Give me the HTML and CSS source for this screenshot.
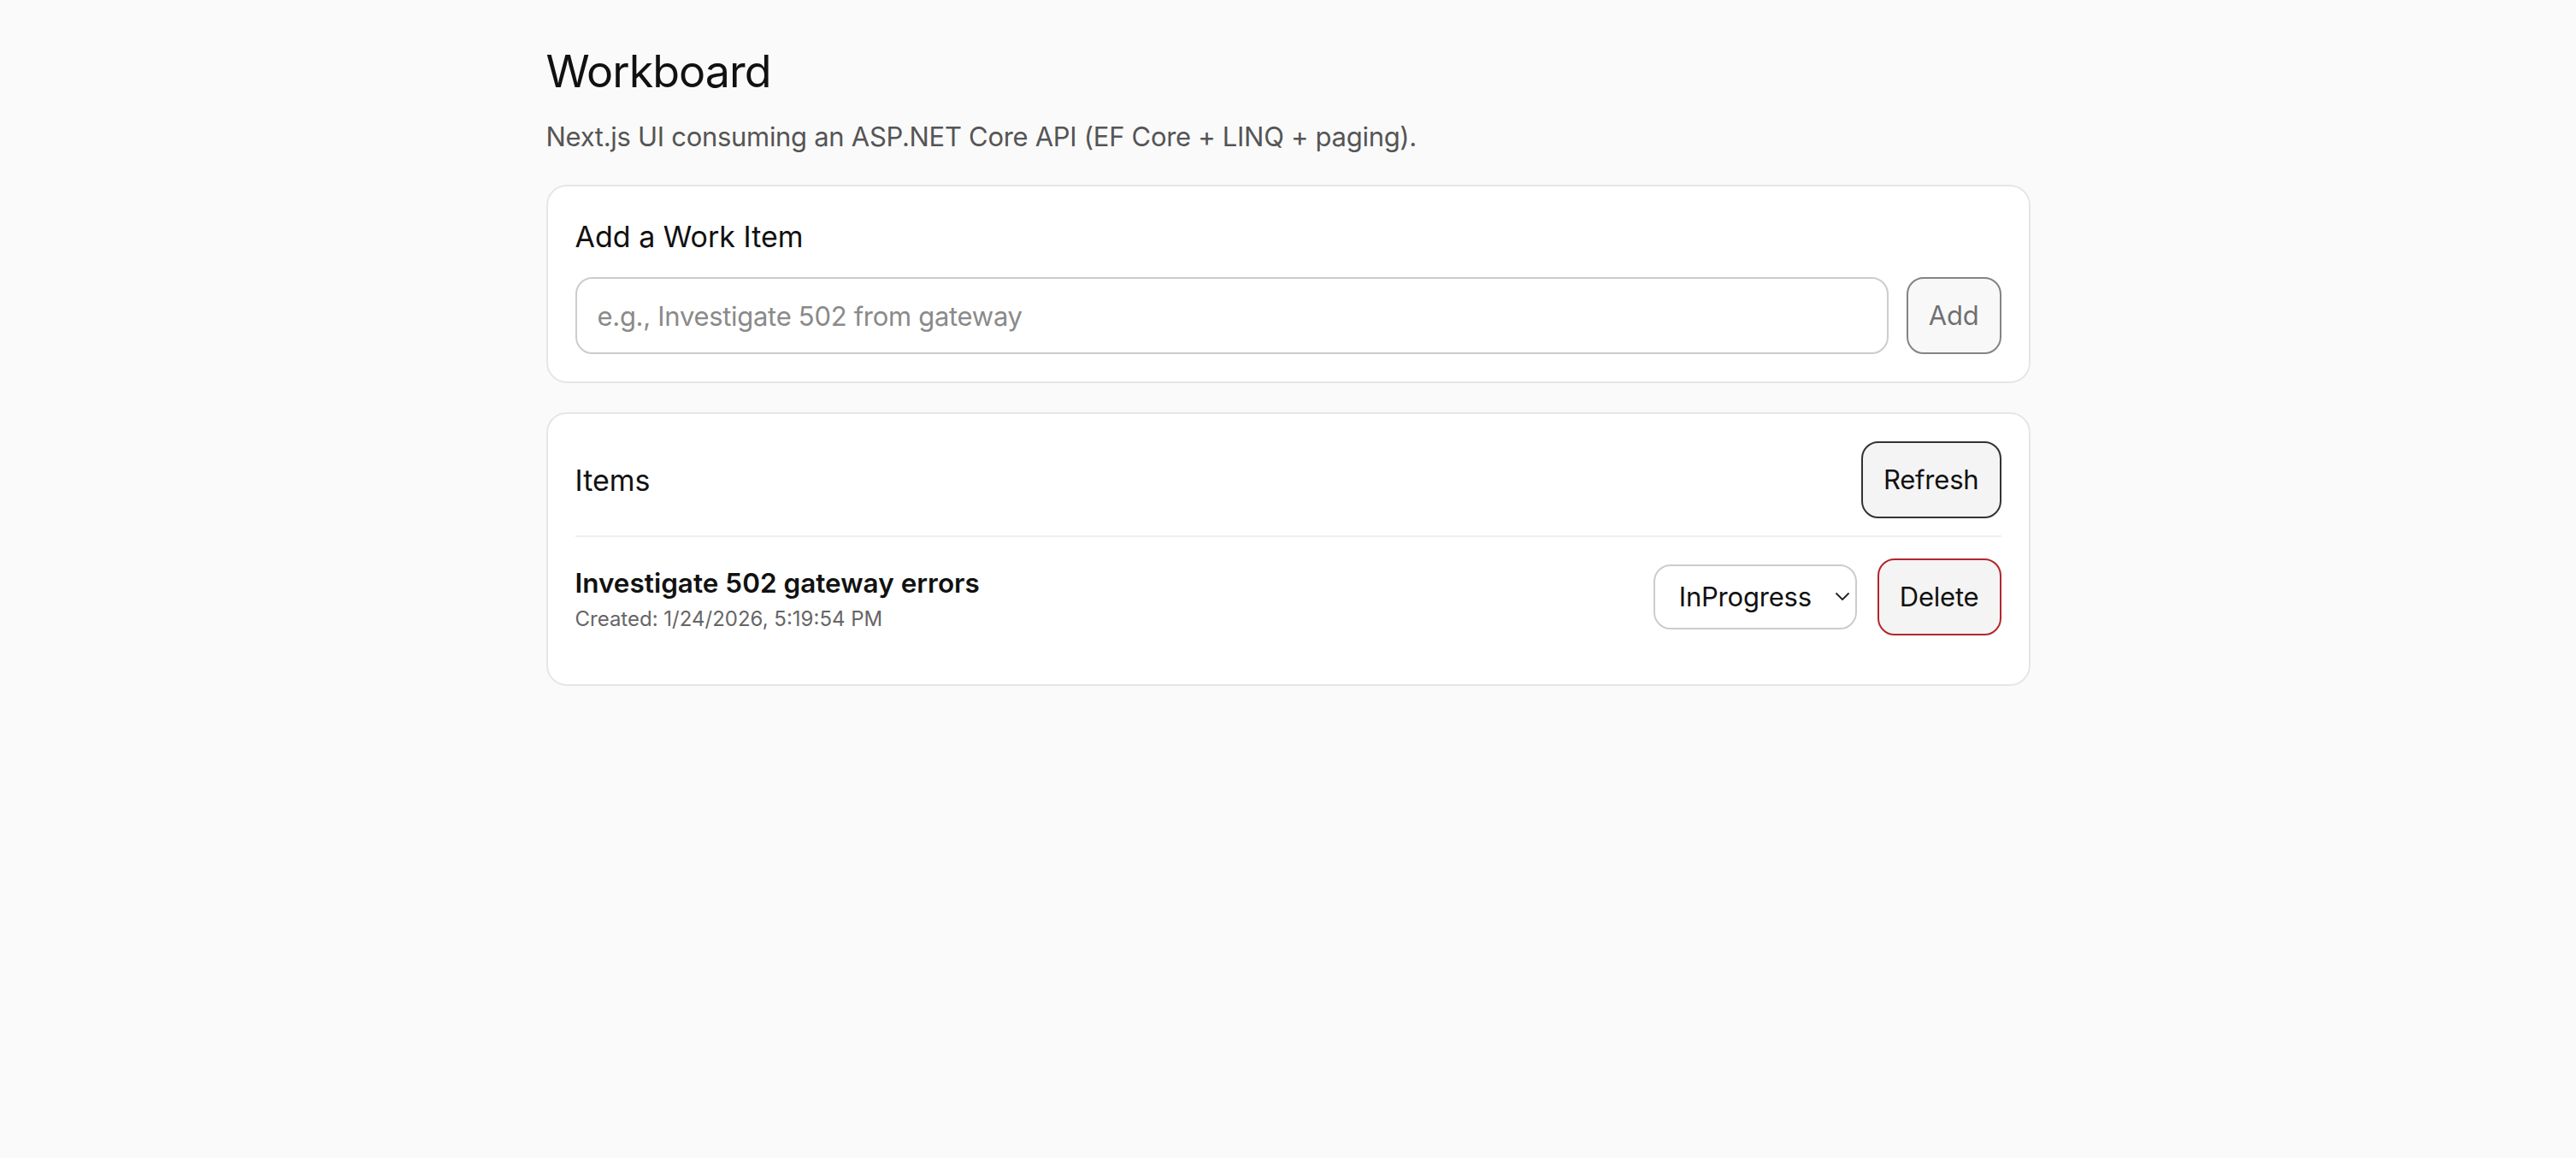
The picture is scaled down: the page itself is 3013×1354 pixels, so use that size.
FILE: index.html
```html
<!DOCTYPE html>
<html lang="en">
<head>
    <meta charset="UTF-8">
    <meta name="viewport" content="width=device-width, initial-scale=1.0">
    <title>Workboard</title>
    <link rel="stylesheet" href="styles.css">
</head>
<body>
    <main class="page">
        <h1>Workboard</h1>
        <p class="subtitle">Next.js UI consuming an ASP.NET Core API (EF Core + LINQ + paging).</p>

        <section class="card">
            <h2>Add a Work Item</h2>
            <form class="add-form" onsubmit="return false;">
                <input class="text-input" type="text" placeholder="e.g., Investigate 502 from gateway">
                <button class="button" type="submit" disabled>Add</button>
            </form>
        </section>

        <section class="card">
            <div class="card-header">
                <h2>Items</h2>
                <button class="button" type="button">Refresh</button>
            </div>

            <ul class="item-list">
                <li class="item">
                    <div class="item-info">
                        <div class="item-title">Investigate 502 gateway errors</div>
                        <div class="item-meta">Created: 1/24/2026, 5:19:54 PM</div>
                    </div>
                    <div class="item-actions">
                        <span class="select-wrap">
                            <select class="status-select">
                                <option>Todo</option>
                                <option selected>InProgress</option>
                                <option>Done</option>
                            </select>
                            <svg class="chevron" width="16" height="9" viewBox="0 0 16 9" aria-hidden="true">
                                <path d="M1 1 L8 8 L15 1" fill="none" stroke="#222" stroke-width="1.8" stroke-linecap="round" stroke-linejoin="round"/>
                            </svg>
                        </span>
                        <button class="button button-danger" type="button">Delete</button>
                    </div>
                </li>
            </ul>
        </section>
    </main>
</body>
</html>
```

FILE: styles.css
```css
body {
    margin: 0;
    background: #fafafa;
    color: #111;
    font-family: Inter, "Noto Sans", "Liberation Sans", sans-serif;
}
.page {
    max-width: 1736px;
    margin: 0 auto;
    padding-top: 50px;
}
h1 {
    margin: 0 0 19px;
    font-size: 52px;
    font-weight: 400;
    line-height: 67px;
    letter-spacing: -1px;
}
.subtitle {
    margin: 0 0 32px;
    color: #555;
    font-size: 31px;
    line-height: 48px;
    letter-spacing: -0.3px;
}
.card {
    background: white;
    border: 2px solid #e6e6e6;
    border-radius: 24px;
    padding: 32px;
    margin-bottom: 34px;
}
.card h2 {
    margin: 0 0 21px;
    font-size: 34px;
    font-weight: 400;
    line-height: 53px;
}
.add-form {
    display: flex;
    gap: 21px;
}
.text-input {
    flex: 1;
    height: 90px;
    box-sizing: border-box;
    border: 2px solid #ccc;
    border-radius: 20px;
    padding: 0 24px;
    font-family: inherit;
    font-size: 31px;
    letter-spacing: -0.3px;
    color: #111;
    outline: none;
}
.text-input::placeholder {
    color: #8a8a8a;
}
.button {
    background: #f4f4f4;
    color: #111;
    border: 2px solid #333;
    border-radius: 20px;
    padding: 24px;
    font-family: inherit;
    font-size: 31px;
    line-height: 38px;
    letter-spacing: -0.2px;
    cursor: pointer;
}
.button:disabled {
    opacity: 0.6;
    cursor: default;
}
.button-danger {
    border-color: #b3262b;
}
.card-header {
    display: flex;
    align-items: center;
    justify-content: space-between;
    margin-bottom: 20px;
}
.card-header h2 {
    margin: 0;
}
.item-list {
    list-style: none;
    margin: 0;
    padding: 0;
}
.item {
    display: flex;
    align-items: center;
    justify-content: space-between;
    border-top: 2px solid #eee;
    padding: 25px 0 25px;
}
.item-info {
    padding-top: 8px;
}
.item-title {
    font-size: 31.5px;
    font-weight: 600;
    line-height: 36px;
}
.item-meta {
    margin-top: 8px;
    color: #666;
    font-size: 24px;
    line-height: 32px;
}
.item-actions {
    display: flex;
    align-items: center;
    gap: 24px;
}
.select-wrap {
    position: relative;
    display: inline-block;
}
.status-select {
    display: block;
    appearance: none;
    -webkit-appearance: none;
    background: white;
    color: #111;
    border: 2px solid #ccc;
    border-radius: 20px;
    padding: 16px 50px 16px 28px;
    font-family: inherit;
    font-size: 31px;
    line-height: 40px;
    letter-spacing: -0.2px;
    outline: none;
}
.chevron {
    position: absolute;
    right: 9px;
    top: 33px;
    pointer-events: none;
}
```
